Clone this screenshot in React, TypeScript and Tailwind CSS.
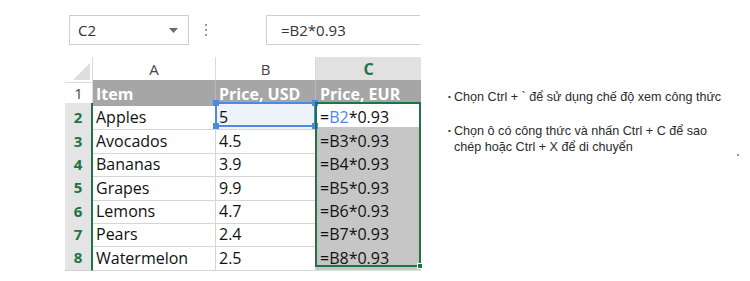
const rows = [
  { n: 2, item: "Apples", usd: "5" },
  { n: 3, item: "Avocados", usd: "4.5" },
  { n: 4, item: "Bananas", usd: "3.9" },
  { n: 5, item: "Grapes", usd: "9.9" },
  { n: 6, item: "Lemons", usd: "4.7" },
  { n: 7, item: "Pears", usd: "2.4" },
  { n: 8, item: "Watermelon", usd: "2.5" },
];

const font = { fontFamily: '"Open Sans", "Noto Sans", sans-serif' };

function Handle({ className }: { className: string }) {
  return <div className={`absolute w-[6px] h-[6px] bg-[#4f86e8] ${className}`} />;
}

export default function App() {
  return (
    <div className="w-[750px] h-[281px] bg-white flex overflow-hidden" style={font}>
      {/* spreadsheet */}
      <div className="pl-[65px] pt-[15px] w-[430px] shrink-0">
        <div className="flex items-center h-[30px]">
          <div className="ml-[4px] w-[120px] h-[30px] border border-[#cfcfcf] flex items-center justify-between pl-[8px] pr-[10px]">
            <span className="text-[15px] text-[#333]">C2</span>
            <svg width="9" height="5" viewBox="0 0 9 5">
              <polygon points="0,0 9,0 4.5,5" fill="#6b6b6b" />
            </svg>
          </div>
          <div className="ml-[16px] flex flex-col gap-[3px]">
            <div className="w-[2px] h-[2px] bg-[#9a9a9a]" />
            <div className="w-[2px] h-[2px] bg-[#9a9a9a]" />
            <div className="w-[2px] h-[2px] bg-[#9a9a9a]" />
          </div>
          <div className="ml-[59px] w-[154px] h-[30px] border-y border-l border-[#cfcfcf] flex items-center pl-[14px]">
            <span className="text-[15px] text-[#333]">=B2*0.93</span>
          </div>
        </div>

        <div className="mt-[12px] relative w-[356px]">
          {/* column headers */}
          <div className="grid grid-cols-[28px_123px_100px_105px] h-[23px]">
            <div className="relative border-r border-b border-[#dadada] bg-white">
              <svg className="absolute right-[2px] bottom-[2px]" width="17" height="17" viewBox="0 0 17 17">
                <polygon points="17,0 17,17 0,17" fill="#dedede" />
              </svg>
            </div>
            <div className="border-r border-b border-[#dadada] bg-white flex items-center justify-center text-[15px] text-[#444]">A</div>
            <div className="border-r border-b border-[#dadada] bg-white flex items-center justify-center text-[15px] text-[#444]">B</div>
            <div className="border-b-2 border-[#217346] bg-[#e1e1e1] flex items-center justify-center text-[16px] font-bold text-[#217346]">C</div>
          </div>

          {/* row 1 */}
          <div className="grid grid-cols-[28px_123px_100px_105px] h-[23.4px]">
            <div className="border-r border-b border-[#dadada] bg-white flex items-center justify-center pt-[2px] text-[15px] text-[#444]">1</div>
            <div className="bg-[#a6a6a6] border-r border-[#b8b8b8] flex items-center pl-[3px] pt-[2px] text-[16px] font-bold text-white">Item</div>
            <div className="bg-[#a6a6a6] border-r border-[#b8b8b8] flex items-center pl-[3px] pt-[2px] text-[16px] font-bold text-white">Price, USD</div>
            <div className="bg-[#a6a6a6] flex items-center pl-[4px] pt-[2px] text-[16px] font-bold text-white">Price, EUR</div>
          </div>

          {rows.map((r) => (
            <div key={r.n} className="grid grid-cols-[28px_123px_100px_105px] h-[23.4px]">
              <div className="border-r-2 border-r-[#217346] border-b border-b-[#d0d0d0] bg-[#e4e4e4] flex items-center justify-center pt-[2px] text-[15px] font-bold text-[#217346]">
                {r.n}
              </div>
              <div className="border-r border-b border-[#d6d6d6] flex items-center pl-[3px] pt-[2px] text-[16px] text-[#111]">{r.item}</div>
              <div
                className={`border-r border-b border-[#d6d6d6] flex items-center pl-[3px] pt-[2px] text-[16px] text-[#111] ${
                  r.n === 2 ? "bg-[#eef3fb]" : ""
                }`}
              >
                {r.usd}
              </div>
              <div
                className={`border-b flex items-center pl-[4px] pt-[2px] text-[16px] text-[#111] ${
                  r.n === 2 ? "bg-white border-[#d6d6d6]" : "bg-[#c6c6c6] border-[#dedede]"
                }`}
              >
                {r.n === 2 ? (
                  <>
                    =<span className="text-[#4f86e8]">B2</span>*0.93
                  </>
                ) : (
                  `=B${r.n}*0.93`
                )}
              </div>
            </div>
          ))}

          {/* B2 reference highlight */}
          <div className="absolute left-[150px] top-[45.4px] w-[101px] h-[24.4px] border-2 border-[#4f86e8]">
            <Handle className="-left-[4px] -top-[4px]" />
            <Handle className="-right-[4px] -top-[4px]" />
            <Handle className="-left-[4px] -bottom-[4px]" />
            <Handle className="-right-[4px] -bottom-[4px]" />
          </div>

          {/* C2:C8 selection */}
          <div className="absolute left-[250px] top-[45.4px] w-[106px] h-[165px] border-2 border-[#217346]">
            <div className="absolute -right-[4px] -bottom-[4px] w-[6px] h-[6px] bg-[#217346] border border-white" />
          </div>
        </div>
      </div>

      {/* notes */}
      <div className="relative flex-1 pt-[89px] pl-[18px] text-[12.6px] leading-[16px] text-[#2b2b2b]" style={{ fontFamily: '"Liberation Sans", Arial, sans-serif' }}>
        <div className="flex">
          <span className="w-[6px] shrink-0 text-[8px] leading-[16px]">•</span>
          <span>Chọn Ctrl + ` để sử dụng chế độ xem công thức</span>
        </div>
        <div className="flex mt-[18px]">
          <span className="w-[6px] shrink-0 text-[8px] leading-[16px]">•</span>
          <span className="w-[275px]">Chọn ô có công thức và nhấn Ctrl + C để sao chép hoặc Ctrl + X để di chuyển</span>
        </div>
        <div className="absolute left-[307px] top-[154px] w-[2px] h-[2px] bg-[#999]" />
      </div>
    </div>
  );
}
